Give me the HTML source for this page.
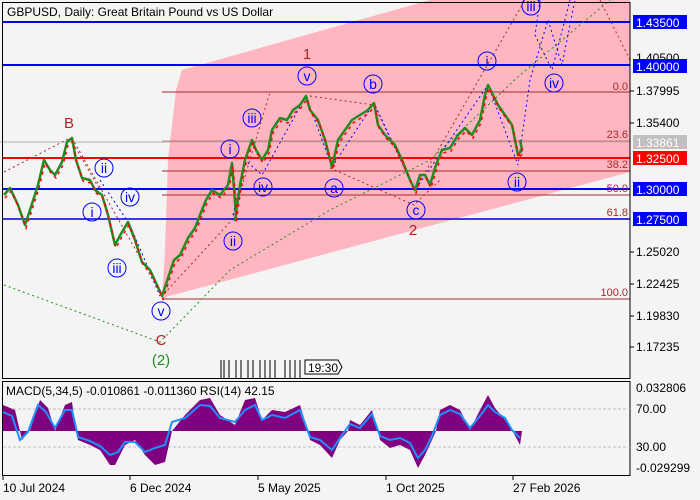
<!DOCTYPE html>
<html><head><meta charset="utf-8"><style>
html,body{margin:0;padding:0;background:#f4f4f4;}
svg{display:block;font-family:"Liberation Sans",sans-serif;}
</style></head><body>
<svg width="700" height="500" viewBox="0 0 700 500" xmlns="http://www.w3.org/2000/svg">
<rect width="700" height="500" fill="#f4f4f4"/>
<!-- pink channel -->
<polygon points="182,70 430,0 630,0 630,172 162,298 165,250 168,160 176,90" fill="#ffb6c1"/>
<!-- horizontal lines -->
<line x1="162" y1="92" x2="630" y2="92" stroke="#a52a2a" stroke-width="1"/>
<line x1="0" y1="142" x2="630" y2="142" stroke="#b0b0b0" stroke-width="1"/>
<line x1="162" y1="141" x2="630" y2="141" stroke="#a52a2a" stroke-width="0.6"/>
<line x1="162" y1="171" x2="630" y2="171" stroke="#a52a2a" stroke-width="1"/>
<line x1="162" y1="195" x2="630" y2="195" stroke="#a52a2a" stroke-width="1"/>
<line x1="162" y1="299" x2="630" y2="299" stroke="#a52a2a" stroke-width="1"/>
<line x1="2" y1="22" x2="630" y2="22" stroke="#0000ff" stroke-width="2"/>
<line x1="2" y1="65" x2="630" y2="65" stroke="#0000ff" stroke-width="2"/>
<line x1="2" y1="158" x2="630" y2="158" stroke="#ff0000" stroke-width="2"/>
<line x1="2" y1="189" x2="630" y2="189" stroke="#0000ff" stroke-width="2"/>
<line x1="2" y1="219" x2="630" y2="219" stroke="#0000cc" stroke-width="1.5"/>
<!-- fib labels -->
<g fill="#a52a2a" font-size="11" text-anchor="end">
<text x="628" y="90">0.0</text><text x="628" y="138">23.6</text><text x="628" y="168">38.2</text>
<text x="628" y="192">50.0</text><text x="628" y="216">61.8</text><text x="628" y="296">100.0</text></g>
<!-- dotted wave lines -->
<g fill="none" stroke-dasharray="2,3" stroke-width="1">
<polyline points="4,172 70,138 100,190" stroke="#a52a2a"/>
<polyline points="72,138 162,296 232,220 270,92" stroke="#a52a2a"/>
<polyline points="310,96 374,105 415,190 525,0" stroke="#a52a2a"/>
<polyline points="330,168 414,205 440,180" stroke="#a52a2a"/>
<polyline points="600,0 630,60" stroke="#a52a2a"/>
<polyline points="4,285 160,342 230,270 330,210 430,160 520,75 610,0" stroke="#228b22"/>
<polyline points="100,180 130,225 160,296" stroke="#0000ff"/>
<polyline points="232,220 245,160 262,175 306,96 332,167 374,103 415,190 488,85 518,165 530,80 548,20 562,65 575,0" stroke="#0000ff"/>
<polyline points="540,0 535,35 552,70 570,0" stroke="#0000ff"/>
</g>
<!-- price -->
<polyline fill="none" stroke="#228b22" stroke-width="2.5" stroke-linejoin="round" points="4,195 10,188 18,205 25,225 30,210 38,185 44,160 50,170 55,175 62,162 67,142 72,138 76,160 82,178 90,180 95,190 102,195 108,215 115,245 122,232 128,222 135,240 142,262 150,270 157,285 162,296 168,278 174,260 180,255 188,238 195,228 200,215 206,200 212,190 220,195 228,185 232,163 236,215 235,220 240,185 245,160 252,140 256,150 262,160 268,150 272,130 280,118 287,120 293,110 300,105 306,96 310,110 318,120 325,140 332,167 338,140 345,130 352,120 360,115 368,110 374,103 378,125 385,135 395,145 402,160 410,180 415,190 420,175 425,175 430,185 436,165 442,150 450,148 458,135 465,128 472,135 480,120 485,95 488,85 493,95 498,105 505,115 512,125 518,155 522,150 520,140"/>
<polyline fill="none" stroke="#ff0000" stroke-width="1.5" stroke-dasharray="3,4" transform="translate(1,3)" points="4,195 10,188 18,205 25,225 30,210 38,185 44,160 50,170 55,175 62,162 67,142 72,138 76,160 82,178 90,180 95,190 102,195 108,215 115,245 122,232 128,222 135,240 142,262 150,270 157,285 162,296 168,278 174,260 180,255 188,238 195,228 200,215 206,200 212,190 220,195 228,185 232,163 236,215 235,220 240,185 245,160 252,140 256,150 262,160 268,150 272,130 280,118 287,120 293,110 300,105 306,96 310,110 318,120 325,140 332,167 338,140 345,130 352,120 360,115 368,110 374,103 378,125 385,135 395,145 402,160 410,180 415,190 420,175 425,175 430,185 436,165 442,150 450,148 458,135 465,128 472,135 480,120 485,95 488,85 493,95 498,105 505,115 512,125 518,155 522,150 520,140"/>
<!-- wave labels -->
<g fill="none" stroke="#0000ff" stroke-width="1">
<circle cx="104" cy="168" r="9"/><circle cx="92" cy="212" r="9"/><circle cx="130" cy="197" r="9"/><circle cx="117" cy="268" r="9"/><circle cx="161" cy="311" r="9"/>
<circle cx="230" cy="149" r="9"/><circle cx="233" cy="241" r="9"/><circle cx="252" cy="118" r="9"/><circle cx="263" cy="187" r="9"/><circle cx="307" cy="76" r="9"/>
<circle cx="334" cy="188" r="9"/><circle cx="373" cy="84" r="9"/><circle cx="416" cy="210" r="9"/><circle cx="487" cy="61" r="9"/><circle cx="517" cy="182" r="9"/><circle cx="531" cy="6" r="9"/><circle cx="554" cy="83" r="9"/>
</g>
<g fill="#0000ff" font-size="14" text-anchor="middle">
<text x="104" y="173">ii</text><text x="92" y="217">i</text><text x="130" y="202">iv</text><text x="117" y="273">iii</text><text x="161" y="316">v</text>
<text x="230" y="154">i</text><text x="233" y="246">ii</text><text x="252" y="123">iii</text><text x="263" y="192">iv</text><text x="307" y="81">v</text>
<text x="334" y="193">a</text><text x="373" y="89">b</text><text x="416" y="215">c</text><text x="487" y="66">i</text><text x="517" y="187">ii</text><text x="531" y="11">iii</text><text x="554" y="88">iv</text>
</g>
<g fill="#b22222" font-size="15" text-anchor="middle">
<text x="69" y="128">B</text><text x="307" y="59">1</text><text x="413" y="235">2</text><text x="161" y="345">C</text></g>
<text x="161" y="365" fill="#228b22" font-size="15" text-anchor="middle">(2)</text>
<!-- time ticks -->
<g stroke="#000" stroke-width="1">
<line x1="221" y1="360" x2="221" y2="378"/><line x1="224" y1="360" x2="224" y2="378"/><line x1="229" y1="360" x2="229" y2="378"/><line x1="236" y1="360" x2="236" y2="378"/><line x1="241" y1="360" x2="241" y2="378"/><line x1="248" y1="360" x2="248" y2="378"/><line x1="253" y1="360" x2="253" y2="378"/><line x1="260" y1="360" x2="260" y2="378"/><line x1="265" y1="360" x2="265" y2="378"/><line x1="270" y1="360" x2="270" y2="378"/><line x1="275" y1="360" x2="275" y2="378"/><line x1="285" y1="360" x2="285" y2="378"/><line x1="290" y1="360" x2="290" y2="378"/><line x1="295" y1="360" x2="295" y2="378"/><line x1="300" y1="360" x2="300" y2="378"/></g>
<path d="M305,360 H338 L342,367 L338,374 H305 Z" fill="#fff" stroke="#000"/>
<text x="308" y="372" font-size="12">19:30</text>
<!-- title -->
<text x="7" y="16" font-size="12" fill="#000">GBPUSD, Daily:  Great Britain Pound vs US Dollar</text>
<!-- frames -->
<rect x="2.5" y="2.5" width="627.5" height="376" fill="none" stroke="#000"/>
<rect x="2.5" y="381.5" width="627.5" height="94" fill="none" stroke="#000"/>
<!-- right axis labels -->
<g font-size="12" fill="#000">
<text x="636" y="62">1.40500</text><text x="636" y="95">1.37995</text><text x="636" y="127">1.35400</text>
<text x="636" y="256">1.25020</text><text x="636" y="288">1.22425</text><text x="636" y="320">1.19830</text><text x="636" y="351">1.17235</text>
<text x="636" y="392">0.032806</text><text x="636" y="413">70.00</text><text x="636" y="451">30.00</text><text x="636" y="472">-0.029299</text></g>
<rect x="633" y="15" width="54" height="14" fill="#0000ff"/><text x="636" y="27" font-size="12" fill="#fff">1.43500</text>
<rect x="633" y="59" width="54" height="14" fill="#0000ff"/><text x="636" y="71" font-size="12" fill="#fff">1.40000</text>
<rect x="633" y="135" width="54" height="14" fill="#c0c0c0"/><text x="636" y="147" font-size="12" fill="#fff">1.33861</text>
<rect x="633" y="151" width="54" height="14" fill="#ff0000"/><text x="636" y="163" font-size="12" fill="#fff">1.32500</text>
<rect x="633" y="182" width="54" height="14" fill="#0000ff"/><text x="636" y="194" font-size="12" fill="#fff">1.30000</text>
<rect x="633" y="212" width="54" height="14" fill="#0000ff"/><text x="636" y="224" font-size="12" fill="#fff">1.27500</text>
<g stroke="#000"><line x1="630" y1="252" x2="634" y2="252"/><line x1="630" y1="284" x2="634" y2="284"/><line x1="630" y1="316" x2="634" y2="316"/><line x1="630" y1="347" x2="634" y2="347"/><line x1="630" y1="91" x2="634" y2="91"/><line x1="630" y1="123" x2="634" y2="123"/></g>
<!-- indicator -->
<line x1="3" y1="409" x2="630" y2="409" stroke="#c0c0c0" stroke-dasharray="3,2"/>
<line x1="3" y1="447" x2="630" y2="447" stroke="#c0c0c0" stroke-dasharray="3,2"/>
<polygon fill="#800080" points="3,431 3,405 15,410 22,440 30,430 40,400 48,408 55,431 65,405 72,402 76,431 78,440 90,445 100,450 110,465 115,465 125,445 135,440 145,455 155,465 165,462 172,431 185,415 200,400 210,398 220,415 235,425 245,400 255,398 262,420 272,410 285,412 300,405 308,431 310,440 320,445 332,458 340,440 348,431 350,420 360,425 372,410 378,431 380,440 390,448 400,445 410,450 418,468 425,455 432,440 436,431 440,410 450,405 460,410 470,430 480,410 488,395 495,408 505,420 512,430 520,445 522,431"/>
<polyline fill="none" stroke="#1e90ff" stroke-width="2" points="3,412 12,416 20,440 28,432 38,405 46,412 55,428 65,410 72,410 78,437 90,441 100,446 110,455 118,452 125,442 135,442 145,452 155,448 165,445 172,422 185,418 200,405 210,406 220,418 235,422 245,410 255,405 262,420 272,415 285,418 300,410 310,437 320,440 332,450 340,438 350,424 360,428 372,414 380,436 390,440 400,438 410,443 418,458 425,450 432,436 440,415 450,410 460,414 470,428 480,416 488,405 495,412 505,418 512,430 520,438"/>
<text x="6" y="395" font-size="12" fill="#000">MACD(5,34,5) -0.010861 -0.011360 RSI(14) 42.15</text>
<!-- dates -->
<g stroke="#000"><line x1="3" y1="476" x2="3" y2="480"/><line x1="130" y1="476" x2="130" y2="480"/><line x1="258" y1="476" x2="258" y2="480"/><line x1="386" y1="476" x2="386" y2="480"/><line x1="513" y1="476" x2="513" y2="480"/></g>
<g font-size="12" fill="#000"><text x="3" y="492">10 Jul 2024</text><text x="130" y="492">6 Dec 2024</text><text x="258" y="492">5 May 2025</text><text x="386" y="492">1 Oct 2025</text><text x="513" y="492">27 Feb 2026</text></g>
</svg>
</body></html>
